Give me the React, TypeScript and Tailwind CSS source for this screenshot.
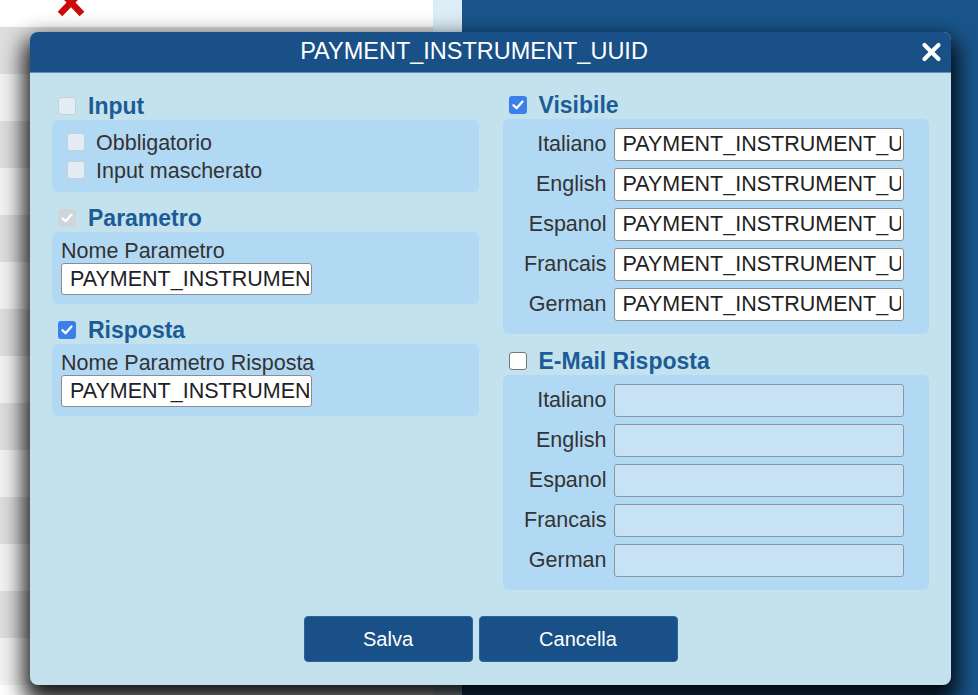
import React from "react";

type CbVariant = "offLight" | "disabledChecked" | "checked" | "off";

function Cb({ variant }: { variant: CbVariant }) {
  const base = "inline-flex shrink-0 items-center justify-center w-[18px] h-[18px] rounded-[3px]";
  if (variant === "offLight")
    return <span className={`${base} bg-[#e3ecf2] border border-[#c5d0d8]`} />;
  if (variant === "off")
    return <span className={`${base} bg-white border border-[#767676]`} />;
  const fill = variant === "checked" ? "bg-[#3b7fe8]" : "bg-[#cfd5da]";
  return (
    <span className={`${base} ${fill}`}>
      <svg width="14" height="14" viewBox="0 0 14 14" fill="none">
        <path d="M2.5 7.3 L5.6 10.2 L11.5 3.6" stroke="white" strokeWidth="2.3" strokeLinecap="round" strokeLinejoin="round" />
      </svg>
    </span>
  );
}

function SectionHeader({ variant, label }: { variant: CbVariant; label: string }) {
  return (
    <div className="flex h-[28px] items-center gap-[12px] pl-[6px]">
      <Cb variant={variant} />
      <span className="text-[23px] font-bold leading-none text-[#1b5c96]">{label}</span>
    </div>
  );
}

const VAL = "PAYMENT_INSTRUMENT_UUID";
const LANGS = ["Italiano", "English", "Espanol", "Francais", "German"];

function LangBox({ filled }: { filled: boolean }) {
  return (
    <div className="flex flex-col gap-[7px] rounded-[6px] bg-[#b2d9f3] pt-[9px] pb-[13px]">
      {LANGS.map((l) => (
        <div key={l} className="flex items-center gap-[7px]">
          <span className="w-[104px] text-right text-[21.5px] leading-none text-[#333]">{l}</span>
          {filled ? (
            <input
              readOnly
              value={VAL}
              className="h-[33px] w-[290px] rounded-[3px] border border-[#8d8d8d] bg-white pl-[8px] pr-[2px] text-[21.5px] text-[#222] outline-none"
            />
          ) : (
            <input
              readOnly
              value=""
              className="h-[33px] w-[290px] rounded-[3px] border border-[#8a96a0] bg-[#c6e2f4] pl-[8px] pr-[2px] text-[21.5px] outline-none"
            />
          )}
        </div>
      ))}
    </div>
  );
}

function ParamBox({ label }: { label: string }) {
  return (
    <div className="flex flex-col rounded-[6px] bg-[#b2d9f3] pt-[7px] pb-[9px] pl-[9px]">
      <span className="h-[24px] text-[21.5px] leading-[24px] text-[#333]">{label}</span>
      <input
        readOnly
        value={VAL}
        className="h-[32px] w-[251px] rounded-[3px] border border-[#8d8d8d] bg-white pl-[8px] pr-[2px] text-[21.5px] text-[#222] outline-none"
      />
    </div>
  );
}

const STRIPES = [0, 1, 2, 3, 4, 5, 6, 7, 8, 9, 10, 11, 12, 13];

export default function App() {
  return (
    <div
      className="relative h-[695px] w-[978px] overflow-hidden"
      style={{ fontFamily: '"Liberation Sans", Arial, sans-serif' }}
    >
      {/* background page */}
      <div className="flex h-full w-full">
        <div className="flex w-[433px] flex-col bg-white">
          <div className="h-[27px] shrink-0 bg-white" />
          {STRIPES.map((i) => (
            <div
              key={i}
              className={`h-[47px] shrink-0 ${i % 2 === 0 ? "bg-[#dedede]" : "bg-[#f3f3f3]"}`}
            />
          ))}
        </div>
        <div className="w-[29px] bg-[#dcedf7]" />
        <div className="flex-1 bg-[#19558b]" />
      </div>

      {/* red X icon of the page behind */}
      <svg className="absolute left-[56px] top-[-13px]" width="30" height="31" viewBox="0 0 30 31">
        <path d="M4 4 L26 27 M26 4 L4 27" stroke="#cc0a0a" strokeWidth="6.5" strokeLinecap="butt" />
      </svg>

      {/* modal */}
      <div className="absolute left-[30px] top-[32px] flex h-[653px] w-[921px] flex-col overflow-hidden rounded-[8px] bg-[#c4e2ee] shadow-[0_12px_22px_6px_rgba(0,0,0,0.9)]">
        <div className="flex h-[41px] shrink-0 items-center border-b border-[#5f8fb8] bg-[#195087]">
          <div className="flex-1 text-center text-[23.5px] leading-none text-white">PAYMENT_INSTRUMENT_UUID</div>
          <div className="flex w-[33px] items-center pl-[3px]">
            <svg width="21" height="20" viewBox="0 0 21 20">
              <path d="M3.5 3 L17.5 17 M17.5 3 L3.5 17" stroke="white" strokeWidth="4.2" strokeLinecap="round" />
            </svg>
          </div>
        </div>

        <div className="flex flex-1 flex-col px-[22px] pt-[18px]">
          <div className="grid grid-cols-2 gap-[24px]">
            {/* left column */}
            <div className="flex flex-col">
              <div className="pt-px">
                <SectionHeader variant="offLight" label="Input" />
              </div>
              <div className="flex flex-col rounded-[6px] bg-[#b2d9f3] py-[8px] pl-[15px]">
                <div className="flex h-[28px] items-center gap-[11px]">
                  <Cb variant="offLight" />
                  <span className="mt-[4px] text-[21.5px] leading-none text-[#333]">Obbligatorio</span>
                </div>
                <div className="flex h-[28px] items-center gap-[11px]">
                  <Cb variant="offLight" />
                  <span className="mt-[4px] text-[21.5px] leading-none text-[#333]">Input mascherato</span>
                </div>
              </div>

              <div className="mt-[12px]">
                <SectionHeader variant="disabledChecked" label="Parametro" />
              </div>
              <ParamBox label="Nome Parametro" />

              <div className="mt-[12px]">
                <SectionHeader variant="checked" label="Risposta" />
              </div>
              <ParamBox label="Nome Parametro Risposta" />
            </div>

            {/* right column */}
            <div className="flex flex-col">
              <SectionHeader variant="checked" label="Visibile" />
              <LangBox filled />
              <div className="mt-[13px]">
                <SectionHeader variant="off" label="E-Mail Risposta" />
              </div>
              <LangBox filled={false} />
            </div>
          </div>

          <div className="mt-[26px] flex justify-center gap-[6px]">
            <button className="h-[46px] w-[169px] rounded-[4px] border border-[#2c6399] bg-[#195087] text-[20px] text-white">
              Salva
            </button>
            <button className="h-[46px] w-[199px] rounded-[4px] border border-[#2c6399] bg-[#195087] text-[20px] text-white">
              Cancella
            </button>
          </div>
        </div>
      </div>
    </div>
  );
}
